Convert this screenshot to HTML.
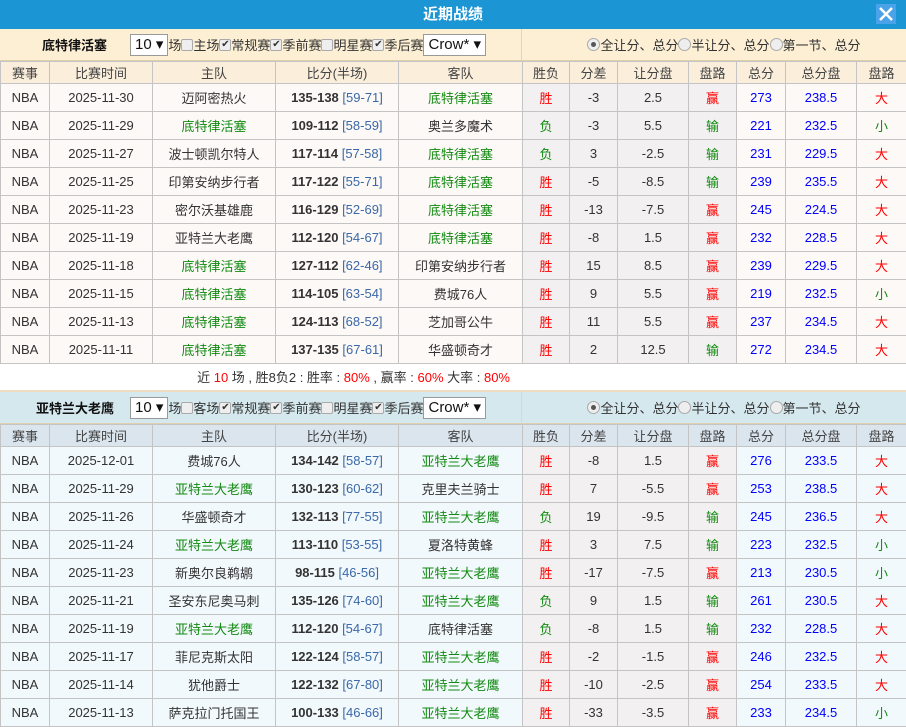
<!DOCTYPE html><html><head><meta charset="utf-8"><style>
*{margin:0;padding:0;box-sizing:border-box}
body{width:906px;height:727px;overflow:hidden;background:#fff;font-family:"Liberation Sans","Noto Sans CJK SC",sans-serif;font-size:13px;color:#333}
.top{height:29px;background:#1c95d4;color:#fff;font-weight:bold;font-size:15px;text-align:center;line-height:29px;position:relative}
.x{position:absolute;right:10px;top:4px;width:20px;height:20px;background:#4aa3e8;}
.f{height:32px;display:flex;border-bottom:1px solid #e0d0b0}
.f1{background:#fcefd4}.f2{background:#d5e8ee}
.fl{width:522px;border-right:1px solid #e5d5b5;display:flex;align-items:center;padding-left:42px;white-space:nowrap}
.fl b{width:88px;font-size:13px;color:#111}
.sel{display:inline-block;height:22px;border:1px solid #999;background:#fff;line-height:20px;padding:0 4px;font-size:15px;color:#111}
.cb{display:inline-block;width:12px;height:12px;border:1px solid #aaa;border-radius:2px;background:#eee;vertical-align:-1px;font-size:10px;line-height:10px;text-align:center;color:#333}
.fr{flex:1;display:flex;align-items:center;justify-content:center;padding-left:20px;white-space:nowrap}
.rd{display:inline-block;width:13px;height:13px;border:1px solid #aaa;border-radius:50%;background:#eee;vertical-align:-1px;position:relative}
.rd.on:after{content:"";position:absolute;left:3px;top:3px;width:5px;height:5px;border-radius:50%;background:#555}
table{border-collapse:collapse;table-layout:fixed;width:906px}
td,th{border:1px solid #c4c4c4;text-align:center;font-weight:normal;white-space:nowrap;overflow:hidden}
th{height:22px;color:#444}
td{height:28px}
.t1 th{background:#fbefdc}.t2 th{background:#dbe5ee}
.t1 td{background:#fdf9f7}.t2 td{background:#f2f9fc}
table td.g{background:#f2f0f0}
.gr{color:#128a12}.r{color:#f00}.b{color:#00f}.hs{color:#3a68a8}
.sum{height:28px;line-height:28px;text-align:right;padding-right:396px;background:#fff;border-bottom:2px solid #f0dcc0}
</style></head><body>
<div class="top">近期战绩<div class="x"><svg width="20" height="20"><path d="M4 4L16 16M16 4L4 16" stroke="#fff" stroke-width="2.5"/></svg></div></div>
<div class="f f1"><div class="fl"><b>底特律活塞</b><span class="sel">10 ▾</span>场<span class="cb"></span>主场<span class="cb">✔</span>常规赛<span class="cb">✔</span>季前赛<span class="cb"></span>明星赛<span class="cb">✔</span>季后赛<span class="sel">Crow* ▾</span></div><div class="fr"><span class="rd on"></span>全让分、总分 <span class="rd"></span>半让分、总分 <span class="rd"></span>第一节、总分</div></div>
<table class="t1"><colgroup><col width="49"><col width="103"><col width="123"><col width="123"><col width="124"><col width="47"><col width="48"><col width="71"><col width="48"><col width="49"><col width="71"><col width="50"></colgroup>
<tr><th>赛事</th><th>比赛时间</th><th>主队</th><th>比分(半场)</th><th>客队</th><th>胜负</th><th>分差</th><th>让分盘</th><th>盘路</th><th>总分</th><th>总分盘</th><th>盘路</th></tr>
<tr><td>NBA</td><td>2025-11-30</td><td>迈阿密热火</td><td><b>135-138</b> <span class="hs">[59-71]</span></td><td class="gr">底特律活塞</td><td class="g r">胜</td><td class="g">-3</td><td class="g">2.5</td><td class="g r">赢</td><td class="b">273</td><td class="b">238.5</td><td class="r">大</td></tr>
<tr><td>NBA</td><td>2025-11-29</td><td class="gr">底特律活塞</td><td><b>109-112</b> <span class="hs">[58-59]</span></td><td>奥兰多魔术</td><td class="g gr">负</td><td class="g">-3</td><td class="g">5.5</td><td class="g gr">输</td><td class="b">221</td><td class="b">232.5</td><td class="gr">小</td></tr>
<tr><td>NBA</td><td>2025-11-27</td><td>波士顿凯尔特人</td><td><b>117-114</b> <span class="hs">[57-58]</span></td><td class="gr">底特律活塞</td><td class="g gr">负</td><td class="g">3</td><td class="g">-2.5</td><td class="g gr">输</td><td class="b">231</td><td class="b">229.5</td><td class="r">大</td></tr>
<tr><td>NBA</td><td>2025-11-25</td><td>印第安纳步行者</td><td><b>117-122</b> <span class="hs">[55-71]</span></td><td class="gr">底特律活塞</td><td class="g r">胜</td><td class="g">-5</td><td class="g">-8.5</td><td class="g gr">输</td><td class="b">239</td><td class="b">235.5</td><td class="r">大</td></tr>
<tr><td>NBA</td><td>2025-11-23</td><td>密尔沃基雄鹿</td><td><b>116-129</b> <span class="hs">[52-69]</span></td><td class="gr">底特律活塞</td><td class="g r">胜</td><td class="g">-13</td><td class="g">-7.5</td><td class="g r">赢</td><td class="b">245</td><td class="b">224.5</td><td class="r">大</td></tr>
<tr><td>NBA</td><td>2025-11-19</td><td>亚特兰大老鹰</td><td><b>112-120</b> <span class="hs">[54-67]</span></td><td class="gr">底特律活塞</td><td class="g r">胜</td><td class="g">-8</td><td class="g">1.5</td><td class="g r">赢</td><td class="b">232</td><td class="b">228.5</td><td class="r">大</td></tr>
<tr><td>NBA</td><td>2025-11-18</td><td class="gr">底特律活塞</td><td><b>127-112</b> <span class="hs">[62-46]</span></td><td>印第安纳步行者</td><td class="g r">胜</td><td class="g">15</td><td class="g">8.5</td><td class="g r">赢</td><td class="b">239</td><td class="b">229.5</td><td class="r">大</td></tr>
<tr><td>NBA</td><td>2025-11-15</td><td class="gr">底特律活塞</td><td><b>114-105</b> <span class="hs">[63-54]</span></td><td>费城76人</td><td class="g r">胜</td><td class="g">9</td><td class="g">5.5</td><td class="g r">赢</td><td class="b">219</td><td class="b">232.5</td><td class="gr">小</td></tr>
<tr><td>NBA</td><td>2025-11-13</td><td class="gr">底特律活塞</td><td><b>124-113</b> <span class="hs">[68-52]</span></td><td>芝加哥公牛</td><td class="g r">胜</td><td class="g">11</td><td class="g">5.5</td><td class="g r">赢</td><td class="b">237</td><td class="b">234.5</td><td class="r">大</td></tr>
<tr><td>NBA</td><td>2025-11-11</td><td class="gr">底特律活塞</td><td><b>137-135</b> <span class="hs">[67-61]</span></td><td>华盛顿奇才</td><td class="g r">胜</td><td class="g">2</td><td class="g">12.5</td><td class="g gr">输</td><td class="b">272</td><td class="b">234.5</td><td class="r">大</td></tr>
</table>
<div class="sum">近 <span class="r">10</span> 场 , 胜8负2 : 胜率 : <span class="r">80%</span> , 赢率 : <span class="r">60%</span> 大率 : <span class="r">80%</span></div>
<div class="f f2"><div class="fl" style="padding-left:36px"><b style="width:94px">亚特兰大老鹰</b><span class="sel">10 ▾</span>场<span class="cb"></span>客场<span class="cb">✔</span>常规赛<span class="cb">✔</span>季前赛<span class="cb"></span>明星赛<span class="cb">✔</span>季后赛<span class="sel">Crow* ▾</span></div><div class="fr"><span class="rd on"></span>全让分、总分 <span class="rd"></span>半让分、总分 <span class="rd"></span>第一节、总分</div></div>
<table class="t2"><colgroup><col width="49"><col width="103"><col width="123"><col width="123"><col width="124"><col width="47"><col width="48"><col width="71"><col width="48"><col width="49"><col width="71"><col width="50"></colgroup>
<tr><th>赛事</th><th>比赛时间</th><th>主队</th><th>比分(半场)</th><th>客队</th><th>胜负</th><th>分差</th><th>让分盘</th><th>盘路</th><th>总分</th><th>总分盘</th><th>盘路</th></tr>
<tr><td>NBA</td><td>2025-12-01</td><td>费城76人</td><td><b>134-142</b> <span class="hs">[58-57]</span></td><td class="gr">亚特兰大老鹰</td><td class="g r">胜</td><td class="g">-8</td><td class="g">1.5</td><td class="g r">赢</td><td class="b">276</td><td class="b">233.5</td><td class="r">大</td></tr>
<tr><td>NBA</td><td>2025-11-29</td><td class="gr">亚特兰大老鹰</td><td><b>130-123</b> <span class="hs">[60-62]</span></td><td>克里夫兰骑士</td><td class="g r">胜</td><td class="g">7</td><td class="g">-5.5</td><td class="g r">赢</td><td class="b">253</td><td class="b">238.5</td><td class="r">大</td></tr>
<tr><td>NBA</td><td>2025-11-26</td><td>华盛顿奇才</td><td><b>132-113</b> <span class="hs">[77-55]</span></td><td class="gr">亚特兰大老鹰</td><td class="g gr">负</td><td class="g">19</td><td class="g">-9.5</td><td class="g gr">输</td><td class="b">245</td><td class="b">236.5</td><td class="r">大</td></tr>
<tr><td>NBA</td><td>2025-11-24</td><td class="gr">亚特兰大老鹰</td><td><b>113-110</b> <span class="hs">[53-55]</span></td><td>夏洛特黄蜂</td><td class="g r">胜</td><td class="g">3</td><td class="g">7.5</td><td class="g gr">输</td><td class="b">223</td><td class="b">232.5</td><td class="gr">小</td></tr>
<tr><td>NBA</td><td>2025-11-23</td><td>新奥尔良鹈鹕</td><td><b>98-115</b> <span class="hs">[46-56]</span></td><td class="gr">亚特兰大老鹰</td><td class="g r">胜</td><td class="g">-17</td><td class="g">-7.5</td><td class="g r">赢</td><td class="b">213</td><td class="b">230.5</td><td class="gr">小</td></tr>
<tr><td>NBA</td><td>2025-11-21</td><td>圣安东尼奥马刺</td><td><b>135-126</b> <span class="hs">[74-60]</span></td><td class="gr">亚特兰大老鹰</td><td class="g gr">负</td><td class="g">9</td><td class="g">1.5</td><td class="g gr">输</td><td class="b">261</td><td class="b">230.5</td><td class="r">大</td></tr>
<tr><td>NBA</td><td>2025-11-19</td><td class="gr">亚特兰大老鹰</td><td><b>112-120</b> <span class="hs">[54-67]</span></td><td>底特律活塞</td><td class="g gr">负</td><td class="g">-8</td><td class="g">1.5</td><td class="g gr">输</td><td class="b">232</td><td class="b">228.5</td><td class="r">大</td></tr>
<tr><td>NBA</td><td>2025-11-17</td><td>菲尼克斯太阳</td><td><b>122-124</b> <span class="hs">[58-57]</span></td><td class="gr">亚特兰大老鹰</td><td class="g r">胜</td><td class="g">-2</td><td class="g">-1.5</td><td class="g r">赢</td><td class="b">246</td><td class="b">232.5</td><td class="r">大</td></tr>
<tr><td>NBA</td><td>2025-11-14</td><td>犹他爵士</td><td><b>122-132</b> <span class="hs">[67-80]</span></td><td class="gr">亚特兰大老鹰</td><td class="g r">胜</td><td class="g">-10</td><td class="g">-2.5</td><td class="g r">赢</td><td class="b">254</td><td class="b">233.5</td><td class="r">大</td></tr>
<tr><td>NBA</td><td>2025-11-13</td><td>萨克拉门托国王</td><td><b>100-133</b> <span class="hs">[46-66]</span></td><td class="gr">亚特兰大老鹰</td><td class="g r">胜</td><td class="g">-33</td><td class="g">-3.5</td><td class="g r">赢</td><td class="b">233</td><td class="b">234.5</td><td class="gr">小</td></tr>
</table>
</body></html>
